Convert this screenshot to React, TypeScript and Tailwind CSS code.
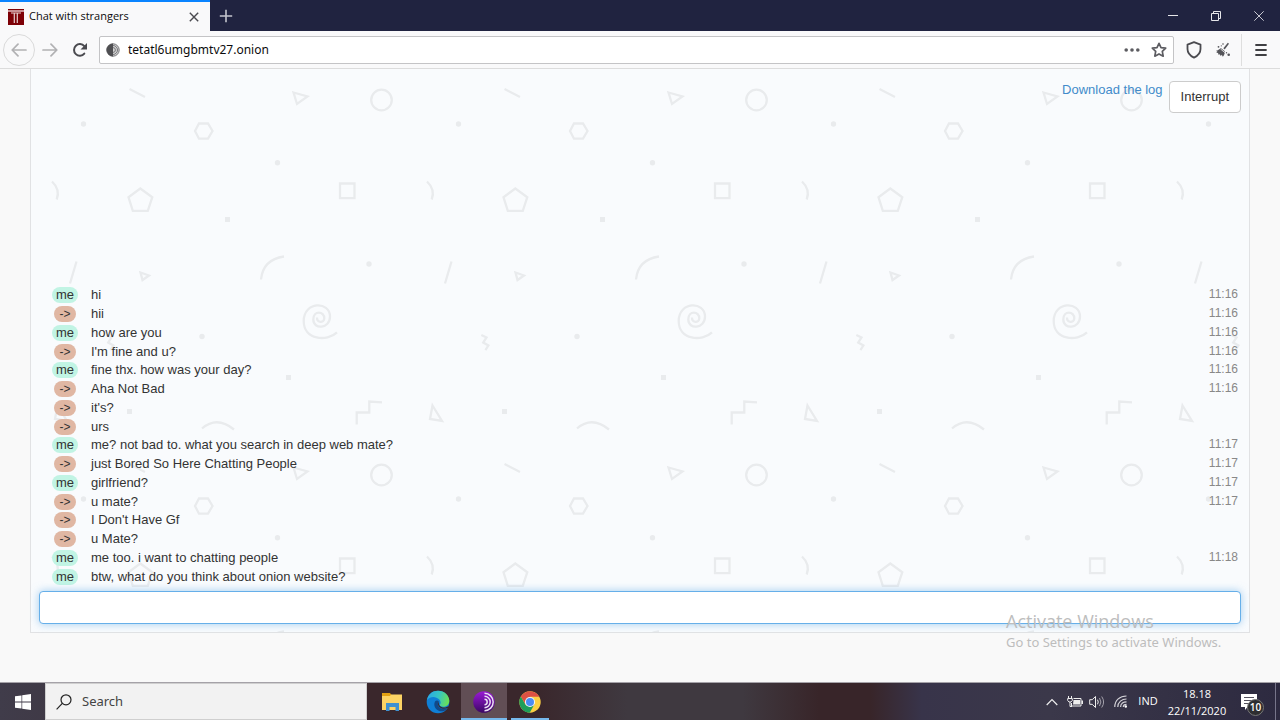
import type { ReactNode } from "react";
import clsx from "clsx";

type Message = { mine: boolean; text: string; time?: string };

const messages: Message[] = [
    { mine: true, text: "hi", time: "11:16" },
    { mine: false, text: "hii", time: "11:16" },
    { mine: true, text: "how are you", time: "11:16" },
    { mine: false, text: "I'm fine and u?", time: "11:16" },
    { mine: true, text: "fine thx. how was your day?", time: "11:16" },
    { mine: false, text: "Aha Not Bad", time: "11:16" },
    { mine: false, text: "it's?" },
    { mine: false, text: "urs" },
    { mine: true, text: "me? not bad to. what you search in deep web mate?", time: "11:17" },
    { mine: false, text: "just Bored So Here Chatting People", time: "11:17" },
    { mine: true, text: "girlfriend?", time: "11:17" },
    { mine: false, text: "u mate?", time: "11:17" },
    { mine: false, text: "I Don't Have Gf" },
    { mine: false, text: "u Mate?" },
    { mine: true, text: "me too. i want to chatting people", time: "11:18" },
    { mine: true, text: "btw, what do you think about onion website?" },
];

const IconButton: React.FC<{ label: string; className?: string; children: ReactNode }> = ({ label, className, children }) => (
    <button type="button" aria-label={label} className={clsx("flex shrink-0 items-center justify-center", className)}>
        {children}
    </button>
);

const TitleBar = () => (
    <header className="flex h-[31px] shrink-0 bg-[#202340]">
        <div className="flex w-[210px] items-center border-t-2 border-[#0a84ff] bg-[#f9f9fa] pr-2 pl-2">
            <svg width="16" height="16" viewBox="0 0 16 16" className="shrink-0">
                <path fill="#7d0006" d="M0 2.5h16V16H0z" />
                <path fill="#7d0006" d="M0 0h16v1.5H0z" />
                <path fill="#d6a5a8" d="M0 1.5h16v1H0z" />
                <path stroke="#e6cfd0" strokeWidth="1.2" d="M3 4h10M6.3 4v10M9.3 4v10" />
            </svg>
            <span className="ml-[5px] flex-1 truncate text-[11px] text-[#0c0c0d]">Chat with strangers</span>
            <IconButton label="Close tab" className="h-4 w-4">
                <svg width="10" height="10" viewBox="0 0 10 10" stroke="#4a4a4f" strokeWidth="1.4">
                    <path d="M.8.8l8.4 8.4M9.2.8L.8 9.2" />
                </svg>
            </IconButton>
        </div>
        <IconButton label="New tab" className="w-8">
            <svg width="14" height="14" viewBox="0 0 14 14" stroke="#c4c5cd" strokeWidth="1.6">
                <path d="M7 .8v12.4M.8 7h12.4" />
            </svg>
        </IconButton>
        <div className="ml-auto flex">
            <IconButton label="Minimize" className="w-[43px]">
                <svg width="10" height="10" viewBox="0 0 10 10" stroke="#e6e6ea">
                    <path d="M0 4.5h10" />
                </svg>
            </IconButton>
            <IconButton label="Restore" className="w-[43px]">
                <svg width="10" height="10" viewBox="0 0 10 10" fill="none" stroke="#e6e6ea">
                    <path d="M.5 2.500h7v7h-7zM2.500 2.500v-2h7v7h-2" />
                </svg>
            </IconButton>
            <IconButton label="Close" className="w-[43px]">
                <svg width="10" height="10" viewBox="0 0 10 10" stroke="#c9c9d2">
                    <path d="M.3.3l9.4 9.4M9.7.3L.3 9.7" />
                </svg>
            </IconButton>
        </div>
    </header>
);

const ToolBar = () => (
    <nav className="flex h-[38px] shrink-0 items-center border-b border-[#dcdcdc] bg-[#f9f9fa] pl-[3px]">
        <IconButton label="Back" className="h-8 w-8 rounded-full border border-[#dadada]">
            <svg width="16" height="14" viewBox="0 0 16 14" fill="none" stroke="#b1b1b3" strokeWidth="1.7" strokeLinecap="round" strokeLinejoin="round">
                <path d="M15 7H1.5M7 1.2L1.2 7 7 12.8" />
            </svg>
        </IconButton>
        <IconButton label="Forward" className="h-8 w-[30px]">
            <svg width="16" height="14" viewBox="0 0 16 14" fill="none" stroke="#b1b1b3" strokeWidth="1.7" strokeLinecap="round" strokeLinejoin="round">
                <path d="M1 7h13.5M9 1.2L14.8 7 9 12.8" />
            </svg>
        </IconButton>
        <IconButton label="Reload" className="h-8 w-[30px]">
            <svg width="16" height="16" viewBox="0 0 16 16" fill="none" stroke="#4a4a4f" strokeWidth="2">
                <path d="M12.3 11.6A5.8 5.8 0 1 1 12.3 4.2" strokeLinecap="round" />
                <path fill="#4a4a4f" stroke="none" d="M15 1v6.500H8.500z" />
            </svg>
        </IconButton>
        <div className="ml-1 flex h-7 flex-1 items-center rounded-[2px] border border-[#c4c4c6] bg-white pr-px pl-[6px]">
            <svg width="14" height="14" viewBox="0 0 14 14" fill="none" className="shrink-0">
                <circle cx="7" cy="7" r="6.2" fill="#d4d4d4" stroke="#77777a" />
                <path fill="#4f4f52" d="M7 .5a6.5 6.5 0 0 0 0 13z" />
                <path stroke="#6a6a6d" strokeWidth=".9" d="M7 2.500a4.500 4.500 0 0 1 0 9M7 4.600a2.400 2.400 0 0 1 0 4.800" />
            </svg>
            <input
                aria-label="Address"
                defaultValue="tetatl6umgbmtv27.onion"
                className="ml-2 h-full min-w-0 flex-1 bg-transparent font-['Noto_Sans','Open_Sans',sans-serif] text-[12px] text-[#0c0c0d] outline-none"
            />
            <IconButton label="Page actions" className="h-6 w-7">
                <svg width="16" height="4" viewBox="0 0 16 4" fill="#5c5c61">
                    <circle cx="2.2" cy="2" r="1.8" />
                    <circle cx="8" cy="2" r="1.8" />
                    <circle cx="13.8" cy="2" r="1.8" />
                </svg>
            </IconButton>
            <IconButton label="Bookmark" className="h-6 w-[26px]">
                <svg width="16" height="16" viewBox="0 0 16 16" fill="none" stroke="#5c5c61" strokeWidth="1.7" strokeLinejoin="round">
                    <path d="M8 1.3l2 4.300 4.700.600-3.400 3.200.900 4.800L8 11.900l-4.200 2.300.900-4.800L1.300 6.200 6 5.600z" />
                </svg>
            </IconButton>
        </div>
        <IconButton label="Security level" className="ml-1 h-8 w-[31px]">
            <svg width="16" height="18" viewBox="0 0 16 18" fill="none" stroke="#4a4a4f" strokeWidth="1.8" strokeLinejoin="round">
                <path d="M8 1.200L14.500 3.600V8c0 4-2.500 6.800-6.500 8.600C4 14.800 1.500 12 1.500 8V3.600z" />
            </svg>
        </IconButton>
        <IconButton label="New identity" className="h-8 w-7">
            <svg width="16" height="16" viewBox="0 0 16 16" fill="#55555a">
                <path d="M12.800.8l1.200 1-4.300 5.700L8.400 6.300z" />
                <path d="M5.800 6l4 3.200c.200 2-.400 3.800-2 5.500l-1-2-1 1.200-1.200-1.600-1.200.4-.300-1.600L1 11l1.600-.9L1 8.800C2.700 8.400 4.500 7.500 5.800 6z" />
                <path stroke="#f9f9fa" strokeWidth=".8" d="M5.500 7l4.500 3.700" />
                <circle cx="3.500" cy="4.800" r=".9" />
                <circle cx="8" cy="2" r=".8" />
                <circle cx="6.300" cy="3.800" r=".6" />
                <circle cx="13.700" cy="12.700" r="1.300" />
                <circle cx="11.500" cy="10.800" r=".7" />
            </svg>
        </IconButton>
        <div className="ml-1 h-8 w-px bg-[#dedede]" />
        <IconButton label="Open menu" className="h-8 w-[38px]">
            <svg width="12" height="12" viewBox="0 0 12 12" stroke="#3f3f43" strokeWidth="1.8" strokeLinecap="round">
                <path d="M1 1h10M1 6h10M1 11h10" />
            </svg>
        </IconButton>
    </nav>
);

// repeating 375px tile of scattered outline shapes
const ShapesBackdrop = () => (
    <svg aria-hidden="true" className="absolute inset-0 h-full w-full">
        <defs>
            <pattern id="shapes" width="375" height="375" patternUnits="userSpaceOnUse">
                <g transform="translate(-31 -69)" fill="none" stroke="#e9ebed" strokeWidth="2.3">
                    <path d="M129.5 89l15.500 8" />
                    <path d="M293.5 92.5l14 4-10.500 7.500z" />
                    <circle cx="381.5" cy="100" r="10.3" />
                    <path d="M195 131l4-7.500h9l4.500 7.500-4.500 7.700h-9z" />
                    <path d="M52 181.500q8.500 8 4.700 18" />
                    <path d="M140.300 188.500l12 8.700-4.500 13.600h-15l-4.300-13.600z" />
                    <path d="M340 183.500h14.500v14.700H340z" />
                    <path d="M76.500 261.500L70 283.500" />
                    <path d="M140.500 272.500l8.500 3-6.500 4.500z" />
                    <path d="M261 279.500q2-20 23-23" />
                    <path d="M337 332.300C327 342 303.700 340 303.700 321C303.700 301 330 301 330 316.500C330 329 313.300 330 313.300 319.500C313.300 310 324.500 311 324.300 318.500C324 323 316.700 323.500 317 317.500" />
                    <path d="M106.300 335l5.200 2.500-3.300 5 5.200 3-3 4.700" />
                    <path d="M356.700 424.500v-12h12.600v-11l12.700.8" />
                    <path d="M57.500 405.500l9.500 15.500-12-2z" />
                    <path d="M202 428.500q15-13 32 1" />
                    <g fill="#e9ebed" stroke="none">
                        <circle cx="83.5" cy="124" r="2.7" />
                        <circle cx="277.5" cy="162.700" r="2.7" />
                        <circle cx="369" cy="264" r="2.7" />
                        <circle cx="202" cy="336.5" r="2.7" />
                        <path d="M225 217h5v5h-5zM286 375h5v5h-5zM127 409h5v5h-5z" />
                    </g>
                </g>
            </pattern>
        </defs>
        <rect width="100%" height="100%" fill="url(#shapes)" />
    </svg>
);

const ChatPanel = () => (
    <main className="relative mx-[30px] mb-[49px] flex flex-1 flex-col border-x border-b border-[#e1e2e4] bg-[#f9fbfd] px-2 pb-2 font-['Liberation_Sans',Arial,sans-serif] text-[13px] text-[#333]">
        <ShapesBackdrop />
        <div className="relative flex items-start justify-end gap-[6px] pt-3">
            <a href="#log" className="leading-[18px] text-[#428bca]">Download the log</a>
            <button type="button" className="h-8 rounded border border-[#ccc] bg-white px-[11px]">Interrupt</button>
        </div>
        <ul className="relative mt-auto mb-[5px] grid h-[300px] auto-rows-fr pr-[3px] pl-[11px]">
            {messages.map(({ mine, text, time }, index) => (
                <li key={index} className="flex items-center leading-[18px]">
                    <div className="flex w-[30px] justify-center">
                        <span className={clsx("rounded-full leading-4", mine ? "bg-[#c1f4e4] px-1 text-[13px]" : "bg-[#e0b7a3] px-[5px] text-[12px]")}>
                            {mine ? "me" : "->"}
                        </span>
                    </div>
                    <span className="ml-[11px] flex-1">{text}</span>
                    {time ? <time className="pb-px text-[12px] leading-[15px] text-[#888]">{time}</time> : null}
                </li>
            ))}
        </ul>
        <input
            aria-label="Message"
            className="relative h-[33px] w-full shrink-0 rounded border border-[#66afe9] bg-white px-3 shadow-[0_0_8px_rgba(102,175,233,0.6)] outline-none"
        />
    </main>
);

const ActivationNotice = () => (
    <div className="pointer-events-none absolute right-[53px] bottom-[69px] w-[221px] whitespace-nowrap text-[#bdbdbd]">
        <p className="text-[18px] leading-6">Activate Windows</p>
        <p className="font-['Noto_Sans','Open_Sans',sans-serif] text-[13px] leading-[18px]">Go to Settings to activate Windows.</p>
    </div>
);

const FolderIcon = () => (
    <svg width="22" height="20" viewBox="0 0 22 20">
        <path fill="#e2a012" d="M1 1h8l1.500 2H21v4H1z" />
        <path fill="#fcd364" d="M1 4h8l1-1.500h11V18H1z" />
        <path fill="#3f91d1" d="M5 19v-8h13v8h-3.500v-4h-6v4z" />
    </svg>
);

const EdgeIcon = () => (
    <svg width="24" height="24" viewBox="0 0 24 24">
        <defs>
            <linearGradient id="edgeTop" x1="0" y1=".3" x2="1" y2=".5">
                <stop offset="0" stopColor="#2ba8e6" />
                <stop offset=".5" stopColor="#35c5c4" />
                <stop offset="1" stopColor="#6be054" />
            </linearGradient>
        </defs>
        <circle cx="12" cy="12" r="11.3" fill="#0f7fd6" />
        <path fill="url(#edgeTop)" d="M1 10C2 4 6.500.700 12 .700c6.500 0 11.300 4.600 11.300 10 0 3.800-2.600 6-6 6-2.600 0-4-1-3.500-2 1.300-1.500 1-3.600-.5-5.200C10 6 4 6 1 10z" />
        <path fill="#114a8b" d="M9 11.500c-2.500 5 2 10.500 8 9.800 1.800-.3 3.300-1.500 4.500-3-4 1.500-9.500.5-9.500-4.300 0-1.500.5-2.200 1-2.500-1-1.500-3-1.500-4 0z" />
        <path fill="#3a262b" d="M13 12c-1 2.800 1.500 5.500 5 5.500 2 0 3.500-.6 4.700-1.500l-.7 2c-4.500 1.800-9.800.3-10-4 0-1 .3-1.700 1-2z" />
    </svg>
);

const TorIcon = () => (
    <svg width="22" height="22" viewBox="0 0 22 22" fill="none">
        <defs>
            <linearGradient id="tor" x1="0" y1="0" x2="0" y2="1">
                <stop offset="0" stopColor="#9a19d6" />
                <stop offset="1" stopColor="#3b0765" />
            </linearGradient>
        </defs>
        <circle cx="11" cy="11" r="10.8" fill="url(#tor)" />
        <path stroke="#eadff2" strokeWidth="1.5" d="M11.500 2.300a8.700 8.700 0 0 1 0 17.400M11.500 5.300a5.700 5.700 0 0 1 0 11.400M11.500 8.300a2.700 2.700 0 0 1 0 5.400" />
    </svg>
);

const ChromeIcon = () => (
    <svg width="22" height="22" viewBox="0 0 22 22">
        <circle cx="11" cy="11" r="10.7" fill="#fbd044" />
        <path fill="#dd5144" d="M1.800 5.500A10.700 10.700 0 0 1 20.300 5.800H11L6.500 13.500z" />
        <path fill="#1e9e5a" d="M1.800 5.500l4.700 8.200L11 16.200l-1.500 5.400A10.700 10.700 0 0 1 1.800 5.500z" />
        <path fill="#1e9e5a" d="M6.500 13.500l9-.2-4.800 8.400-1.500-.1z" />
        <circle cx="11" cy="11" r="5.1" fill="#f4f4f4" />
        <circle cx="11" cy="11" r="4" fill="#4a8cf5" />
    </svg>
);

const TaskBar = () => (
    <footer className="flex h-[38px] shrink-0 border-t border-[#a5a2a8] bg-[linear-gradient(90deg,#403c4a_0%,#3a272c_29%,#3a272c_42%,#3f3940_49%,#3f3940_58%,#382529_64%,#382529_68%,#38344a_72%,#3b384a_82%,#2d2a40_100%)] text-white">
        <IconButton label="Start" className="w-[45px]">
            <svg width="16" height="16" viewBox="0 0 16 16" fill="#fff">
                <path d="M0 2.300l6.500-.9v6.200H0zM7.200 1.300L16 0v7.600H7.200zM0 8.400h6.500v6.200L0 13.700zM7.200 8.400H16V16l-8.800-1.300z" />
            </svg>
        </IconButton>
        <label className="flex w-[322px] items-center border border-[#cfcfcf] bg-[#f2f2f2] pl-[10px]">
            <svg width="16" height="16" viewBox="0 0 16 16" fill="none" stroke="#222" strokeWidth="1.2" className="shrink-0">
                <circle cx="10" cy="5.8" r="5" />
                <path d="M6.300 9.400L.6 15.300" />
            </svg>
            <input
                aria-label="Search"
                placeholder="Search"
                className="ml-[10px] min-w-0 flex-1 bg-transparent font-['Noto_Sans','Open_Sans',sans-serif] text-[13px] outline-none placeholder:text-[#444]"
            />
        </label>
        <div className="ml-[2px] flex">
            <IconButton label="File Explorer" className="w-[46px]"><FolderIcon /></IconButton>
            <IconButton label="Microsoft Edge" className="w-[46px]"><EdgeIcon /></IconButton>
            <IconButton label="Tor Browser" className="w-[46px] border-b-2 border-[#76b9ed] bg-[#614e55] pt-[2px]"><TorIcon /></IconButton>
            <div className="flex w-[46px] justify-center px-1">
                <IconButton label="Google Chrome" className="w-full border-b-2 border-[#76b9ed] pt-[2px]"><ChromeIcon /></IconButton>
            </div>
        </div>
        <div className="ml-auto flex items-center">
            <IconButton label="Show hidden icons" className="w-6">
                <svg width="12" height="8" viewBox="0 0 12 8" fill="none" stroke="#eee" strokeWidth="1.2">
                    <path d="M.7 7L6 1.500 11.300 7" />
                </svg>
            </IconButton>
            <IconButton label="Battery" className="w-[22px]">
                <svg width="16" height="12" viewBox="0 0 16 12" fill="none" stroke="#eee">
                    <path d="M1.500 0v2M4.500 0v2M.7 2.500h4.600v2L4 6H2L.7 4.500zM3 6v4.500h2" />
                    <path d="M6.500 2.500h7.500v7.500H4.500V7" />
                    <path fill="#eee" stroke="none" d="M6.500 4H13v4.500H6zM14.500 4.500H16v3.500h-1.500z" />
                </svg>
            </IconButton>
            <IconButton label="Volume" className="w-[22px]">
                <svg width="16" height="14" viewBox="0 0 16 14" fill="none" stroke="#eee">
                    <path d="M.7 4.700h2.500L6.500 1.500v11L3.200 9.300H.7zM8.500 4.700q1.500 2.300 0 4.600" />
                    <path stroke="#a3a1ab" d="M10.500 3q2.800 4 0 8M12.700 1.500q3.800 5.500 0 11" />
                </svg>
            </IconButton>
            <IconButton label="Network" className="w-[26px]">
                <svg width="14" height="13" viewBox="0 0 14 13" fill="none" stroke="#d4d3d8" strokeWidth="1.2">
                    <path d="M.8 12C.8 5 6 1 12.500 1M3.800 12C3.800 7 8 4 12.500 4M6.600 12c0-3.500 3-5.200 5.900-5.200" />
                    <path d="M9.300 12c0-1.800 1.500-2.700 3.200-2.700" />
                    <circle cx="11.8" cy="11.5" r="1.2" fill="#fff" stroke="none" />
                </svg>
            </IconButton>
            <span className="w-[28px] text-center text-[11px]">IND</span>
            <div className="w-[70px] text-center text-[11px] leading-[17px]">
                <p>18.18</p>
                <p>22/11/2020</p>
            </div>
            <button type="button" aria-label="Notifications" className="relative mr-3 ml-[9px] h-5 w-[22px]">
                <svg width="16" height="16" viewBox="0 0 16 16">
                    <path fill="#fff" d="M0 0h16v13H6.500L4 16v-3H0z" />
                    <path stroke="#55525f" d="M3 3.500h10M3 6.500h10M3 9.500h7" />
                </svg>
                <span className="absolute top-[7px] left-[6px] flex h-[17px] w-[17px] items-center justify-center rounded-full border border-[#777] bg-[#2d2d30] text-[10px] leading-none font-semibold">10</span>
            </button>
        </div>
        <div className="mr-1 w-px bg-[#77758a]" />
    </footer>
);

export default function App() {
    return (
        <div className="relative flex h-screen flex-col overflow-hidden bg-[#f9f9f9] font-['Open_Sans','Noto_Sans',sans-serif]">
            <TitleBar />
            <ToolBar />
            <ChatPanel />
            <TaskBar />
            <ActivationNotice />
        </div>
    );
}
